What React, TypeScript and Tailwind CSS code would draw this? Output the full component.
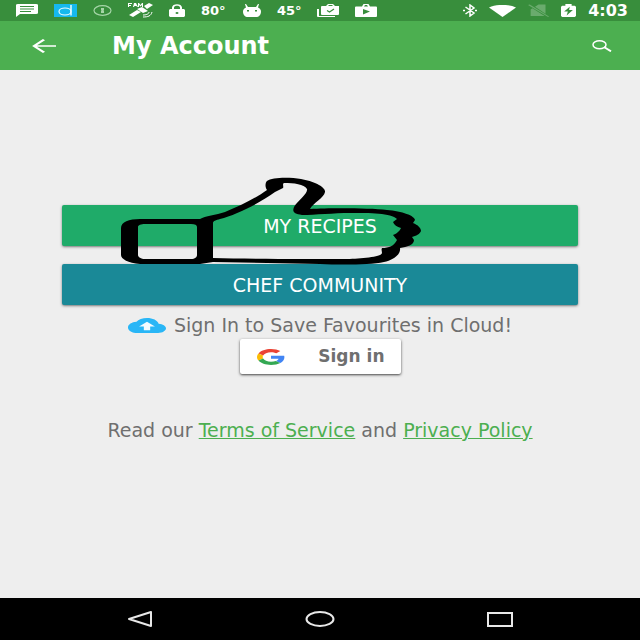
import React from "react";

type IconProps = { className: string; viewBox?: string; children: React.ReactNode };

function Icon({ className, viewBox = "0 0 24 24", children }: IconProps) {
  return (
    <svg className={`shrink-0 ${className}`} viewBox={viewBox} preserveAspectRatio="none" fill="currentColor" aria-hidden="true">
      {children}
    </svg>
  );
}

function StatusBar() {
  return (
    <div className="flex h-[21px] items-center justify-between bg-[#388e3c] pl-4 pr-3 text-white">
      <div className="flex items-center gap-4 text-[13px] font-bold">
        <Icon className="h-[13px] w-[22px]" viewBox="0 0 22 13">
          <path fillRule="evenodd" d="M2 0h18q2 0 2 1v8q0 1-2 1H4l-4 3V1q0-1 2-1zm2 2v1h14V2zm0 2.500v1h14v-1zM4 7v1h11V7z" />
        </Icon>
        <Icon className="h-[13px] w-[23px]" viewBox="0 0 23 13">
          <path fill="#16b9ee" d="M0 0h23v13H0z" />
          <path fill="none" stroke="#e8fbff" strokeWidth="1.500" d="M17 1v10.500" />
          <ellipse cx="11" cy="7.500" rx="6" ry="3.500" fill="none" stroke="#e8fbff" strokeWidth="1.200" />
        </Icon>
        <Icon className="h-[11px] w-[19px] text-[#a5d5a7]" viewBox="0 0 19 11">
          <ellipse cx="9.500" cy="5.500" rx="8.500" ry="4.800" fill="none" stroke="currentColor" strokeWidth="1.200" />
          <path d="M8 3h3v2l-.5.5.5.5v2H8V6l.5-.5L8 5z" />
        </Icon>
        <Icon className="h-[15px] w-[25px]" viewBox="0 0 25 15">
          <path d="M0 0h4v1H1v1h2v1H1v1H0zM6 0h2l2 4H9L8.500 3h-2L6 4H5zM10 0h1l1.500 2L14 0h1v4h-1V2l-1.500 1.500L11 2v2h-1z" />
          <path d="M16 3l5-3 4 2-6 4zM1 12l8-5 4 2-8 5zM9 6l5-2 6 4-5 2z" />
          <path d="M15 14c5 0 8-1 9-5M15 12c3 0 6-1 6-3" fill="none" stroke="currentColor" strokeWidth="1" />
        </Icon>
        <Icon className="h-[13px] w-4" viewBox="0 0 16 13">
          <path fillRule="evenodd" d="M1 5h2V3.500C3-1 13-1 13 3.500V5h2l1 1v6l-1 1H1l-1-1V6zm4 0h6V3.500c0-2.500-6-2.500-6 0zm3 3a1.500 1 0 100 2 1.500 1 0 000-2z" />
        </Icon>
        <span className="w-[26px]">80°</span>
        <Icon className="h-[13px] w-[18px]" viewBox="0 0 18 13">
          <path d="M3 0l2 3h8l2-3h1l-1 3.500c2 1 3 2 3 4C18 11 16 13 13 13H5c-3 0-5-2-5-5.500 0-2 1-3 3-4L2 0z" />
          <path fill="#388e3c" d="M4 6h2v1.500H4zM12 6h2v1.500h-2z" />
        </Icon>
        <span className="w-6">45°</span>
        <Icon className="h-[13px] w-[22px]" viewBox="0 0 22 13">
          <path fillRule="evenodd" d="M5 2h4l2-2h5l2 2h4v8q0 1-1 1H5q-1 0-1-1V3q0-1 1-1zm6 0h5l-1-1h-3z" />
          <path d="M0 5h2v7h16v1H1q-1 0-1-1z" />
          <path fill="none" stroke="#388e3c" strokeWidth="1.200" d="M10 6.500L12.500 8 17 5" />
        </Icon>
        <Icon className="h-[13px] w-[22px]" viewBox="0 0 22 13">
          <path fillRule="evenodd" d="M1 2.500h6L8.500 0h5L15 2.500h6q1 0 1 1V12q0 1-1 1H1q-1 0-1-1V3.500q0-1 1-1zm8 0h4l-1-1.500h-2zM8 5v5.500l7-3z" />
        </Icon>
      </div>
      <div className="flex items-center gap-3">
        <Icon className="h-[13px] w-[14px]" viewBox="0 0 14 13">
          <path fill="none" stroke="currentColor" strokeWidth="1.500" d="M2.500 3L11 9l-4 3V1l4 3-8.500 6M0 6.500h2m10 0h2" />
        </Icon>
        <Icon className="h-3 w-[27px]">
          <path d="M0 5C7-2 17-2 24 5L12 24z" />
        </Icon>
        <Icon className="h-[13px] w-[21px] text-[#6aab6d]">
          <path d="M20 1v17L8 5l4-4zM3 22V10l2-2 14 14zM0 2l2-1 22 22-1 1z" />
        </Icon>
        <Icon className="h-[13px] w-[15px]">
          <path fillRule="evenodd" d="M2 3h5V0h10v3h5l2 2v17l-2 2H2l-2-2V5zm12 2L5 14h6l-2 7 10-10h-6z" />
        </Icon>
        <span className="text-base font-bold leading-5">4:03</span>
      </div>
    </div>
  );
}

function AppBar() {
  return (
    <header className="flex h-[49px] items-center bg-[#4caf50] pl-8 pr-7 text-white">
      <button type="button" aria-label="Back" className="flex">
        <Icon className="h-[14px] w-6">
          <path fill="none" stroke="currentColor" strokeWidth="2.800" d="M24 12H2M12 1L2 12l10 11" />
        </Icon>
      </button>
      <h1 className="ml-14 flex-1 text-2xl font-bold">My Account</h1>
      <button type="button" aria-label="Search" className="flex">
        <Icon className="h-3 w-5" viewBox="0 0 20 12">
          <ellipse cx="7.500" cy="4.800" rx="6.500" ry="4" fill="none" stroke="currentColor" strokeWidth="1.500" />
          <path fill="none" stroke="currentColor" strokeWidth="2" d="M12 7l7 4.300" />
        </Icon>
      </button>
    </header>
  );
}

function ThumbsUp() {
  return (
    <svg
      className="pointer-events-none absolute -top-7 left-[59px] h-[88px] w-[302px] text-black"
      viewBox="121 177 302 88"
      fill="currentColor"
      aria-hidden="true"
    >
      <path
        fillRule="evenodd"
        d="M121 228C121 222 129 219 140 219H200C205 216 216 215 225 212C240 206 256 198 267 190C265 187 265 183 267 181C272 177 290 177 301 179C313 181 326 187 325 192C324 198 313 203 310 209C330 208 369 208 387 210C402 211 415 216 415 220L413 223C418 225 421 228 421 231C420 234 416 236 412 237L414 240C414 245 407 247 400 248C401 254 394 260 384 262C370 265 340 265 320 264L213 262L200 264H140C128 263 121 259 121 255ZM138 227V255C138 257 141 259 145 259H191C195 259 197 257 197 255V227C197 225 195 224 191 224H145C141 224 138 225 138 227ZM213 223V258C250 259 310 259 345 259C358 259 382 257 382 253C382 251 381 250 382 248C389 248 394 246 397 240L393 235C396 234 400 231 401 228C397 227 394 225 393 222L397 219C391 213 370 213 350 213C334 213 315 215 302 215C294 214 292 212 294 207C298 200 308 194 307 189C304 184 294 183 284 183C282 184 284 187 283 188L275 192C260 203 236 215 220 219C216 220 213 221 213 223Z"
      />
    </svg>
  );
}

function GoogleLogo() {
  return (
    <Icon className="h-4 w-7" viewBox="0 0 48 48">
      <path fill="#EA4335" d="M24 9.500c3.540 0 6.710 1.220 9.210 3.600l6.850-6.850C35.900 2.380 30.470 0 24 0 14.620 0 6.510 5.380 2.560 13.220l7.980 6.190C12.430 13.720 17.740 9.500 24 9.500z" />
      <path fill="#4285F4" d="M46.980 24.550c0-1.570-.15-3.090-.38-4.550H24v9.020h12.940c-.58 2.960-2.260 5.480-4.780 7.180l7.730 6c4.510-4.180 7.090-10.360 7.090-17.650z" />
      <path fill="#FBBC05" d="M10.530 28.590c-.48-1.450-.76-2.990-.76-4.590s.27-3.140.76-4.590l-7.980-6.190C.92 16.460 0 20.120 0 24c0 3.880.92 7.540 2.560 10.780l7.970-6.190z" />
      <path fill="#34A853" d="M24 48c6.480 0 11.930-2.130 15.890-5.810l-7.730-6c-2.150 1.450-4.920 2.300-8.160 2.300-6.260 0-11.570-4.220-13.470-9.910l-7.980 6.190C6.510 42.620 14.620 48 24 48z" />
    </Icon>
  );
}

export default function App() {
  return (
    <div className="flex min-h-screen flex-col bg-[#eeeeee] font-['DejaVu_Sans',sans-serif]">
      <StatusBar />
      <AppBar />
      <main className="flex flex-1 flex-col items-center px-[62px] pt-[135px] text-[#6f6f6f]">
        <div className="relative flex w-full flex-col gap-[18px] text-[19px] leading-5 text-white">
          <button type="button" className="h-[41px] w-full rounded-xs bg-[#1fab69] shadow-sm shadow-black/40">
            MY RECIPES
          </button>
          <button type="button" className="h-[41px] w-full rounded-xs bg-[#1a8997] shadow-sm shadow-black/40">
            CHEF COMMUNITY
          </button>
          <ThumbsUp />
        </div>
        <div className="-mx-10 mt-[10px] flex items-center gap-2 whitespace-nowrap">
          <Icon className="h-[15px] w-[38px] text-[#29b6f6]" viewBox="0 4 24 16">
            <path fill="#f5fbff" d="M6 7h12v11H6z" />
            <path fillRule="evenodd" d="M19.350 10.040C18.670 6.590 15.640 4 12 4 9.110 4 6.600 5.640 5.350 8.040 2.340 8.360 0 10.910 0 14c0 3.310 2.690 6 6 6h13c2.760 0 5-2.240 5-5 0-2.640-2.050-4.780-4.650-4.960zM14 13v4h-4v-4H7l5-5 5 5h-3z" />
          </Icon>
          <p className="text-[19px] leading-5">Sign In to Save Favourites in Cloud!</p>
        </div>
        <button
          type="button"
          className="mt-1 flex h-[35px] w-[161px] items-center justify-between rounded-xs bg-white pl-[17px] pr-4 text-[17px] font-bold shadow-sm shadow-black/60"
        >
          <GoogleLogo />
          <span>Sign in</span>
        </button>
        <p className="-mx-10 mt-[46px] whitespace-nowrap text-[19px] leading-5">
          Read our{" "}
          <a href="#terms" className="text-[#4caf50] underline">Terms of Service</a>
          {" "}and{" "}
          <a href="#privacy" className="text-[#4caf50] underline">Privacy Policy</a>
        </p>
      </main>
      <nav className="grid h-[42px] grid-cols-3 items-center bg-black px-[50px] text-[#e8e8e8]">
        <button type="button" aria-label="Back" className="flex justify-center">
          <Icon className="h-4 w-[26px]" viewBox="0 0 26 16">
            <path fill="none" stroke="currentColor" strokeWidth="2" strokeLinejoin="round" d="M24 1v14L2 8z" />
          </Icon>
        </button>
        <button type="button" aria-label="Home" className="flex justify-center">
          <Icon className="h-4 w-[30px]" viewBox="0 0 30 16">
            <ellipse cx="15" cy="8" rx="13.500" ry="7" fill="none" stroke="currentColor" strokeWidth="2" />
          </Icon>
        </button>
        <button type="button" aria-label="Recent apps" className="flex justify-center">
          <Icon className="h-[15px] w-[26px]" viewBox="0 0 26 15">
            <rect x="1" y="1" width="24" height="13" fill="none" stroke="currentColor" strokeWidth="2" />
          </Icon>
        </button>
      </nav>
    </div>
  );
}
